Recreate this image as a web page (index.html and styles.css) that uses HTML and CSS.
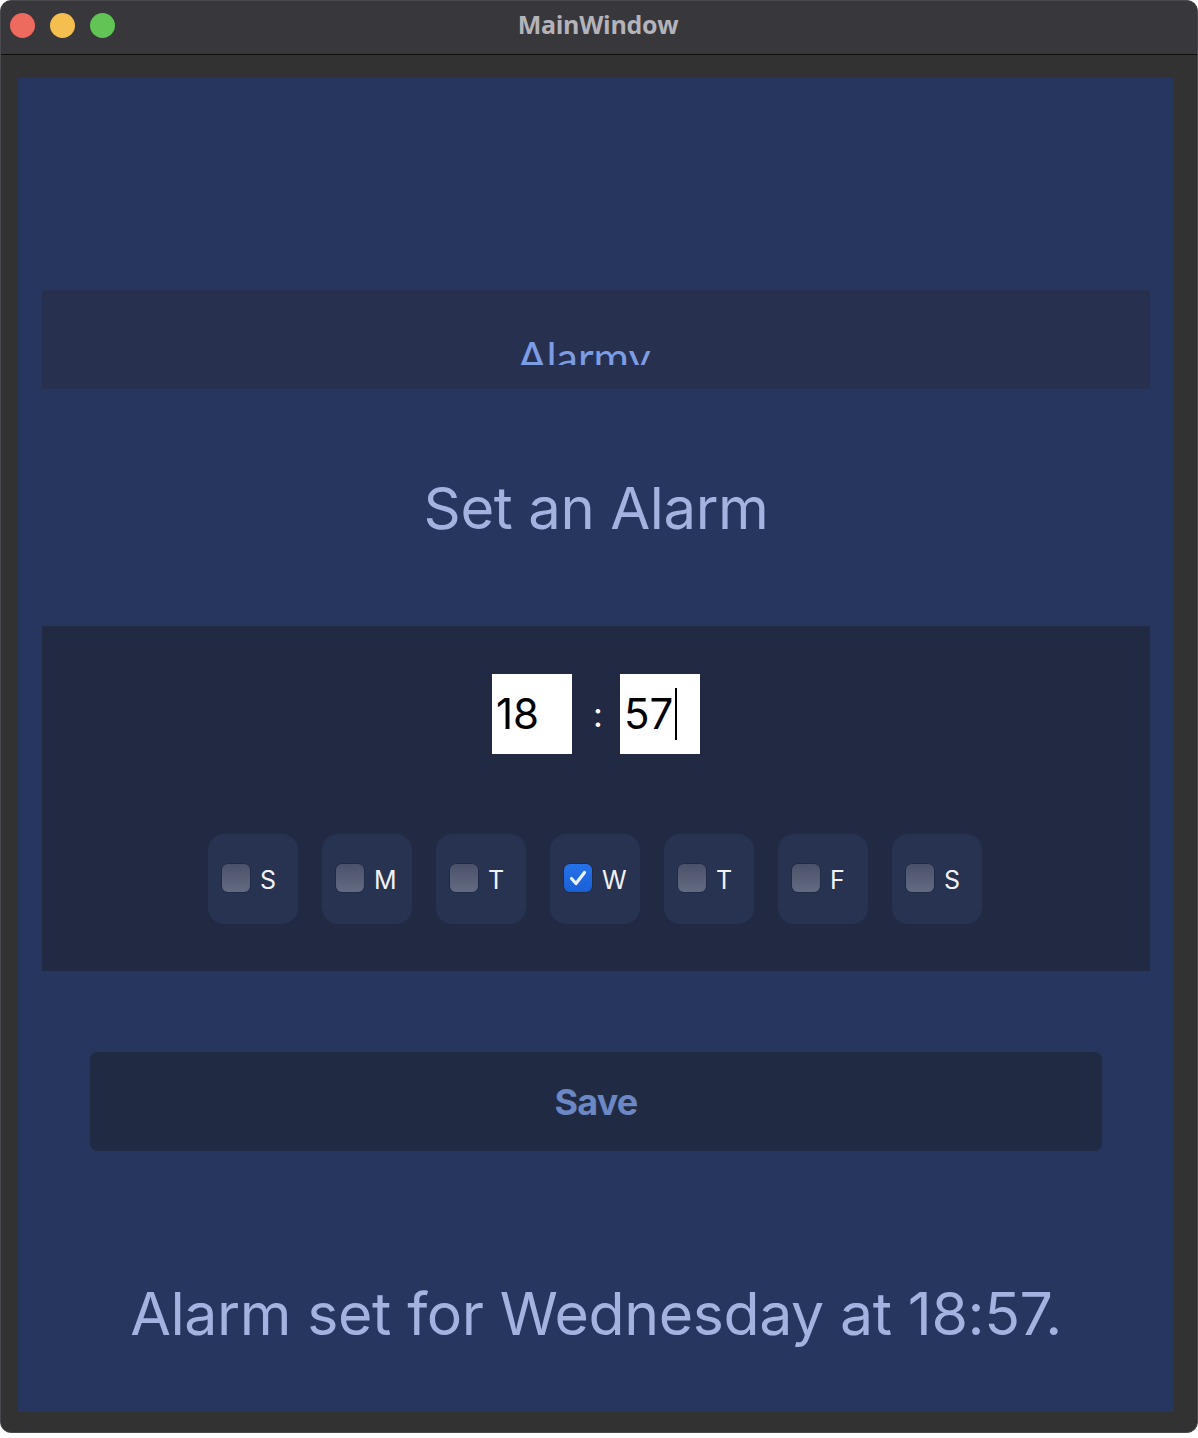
FILE: index.html
```html
<!DOCTYPE html>
<html>
<head>
<meta charset="utf-8">
<link rel="stylesheet" href="styles.css">
</head>
<body>
<div class="window">
  <div class="titlebar">
    <div class="lights">
      <span class="light red"></span>
      <span class="light yellow"></span>
      <span class="light green"></span>
    </div>
    <div class="wtitle">MainWindow</div>
  </div>
  <div class="frame">
    <div class="panel">
      <div class="header"><div class="brand">Alarmy</div></div>
      <div class="heading">Set an Alarm</div>
      <div class="timebox">
        <div class="timerow">
          <div class="tinput">18</div>
          <div class="colon">:</div>
          <div class="tinput">57<span class="caret"></span></div>
        </div>
        <div class="days">
          <div class="day"><span class="cb"></span><span class="dl">S</span></div>
          <div class="day"><span class="cb"></span><span class="dl">M</span></div>
          <div class="day"><span class="cb"></span><span class="dl">T</span></div>
          <div class="day"><span class="cb checked"><svg viewBox="0 0 28 28" width="28" height="28"><path d="M7.5 14.5 L12 19.5 L20.5 8.5" fill="none" stroke="#e8efff" stroke-width="3.2" stroke-linecap="round" stroke-linejoin="round"/></svg></span><span class="dl">W</span></div>
          <div class="day"><span class="cb"></span><span class="dl">T</span></div>
          <div class="day"><span class="cb"></span><span class="dl">F</span></div>
          <div class="day"><span class="cb"></span><span class="dl">S</span></div>
        </div>
      </div>
      <div class="savebtn">Save</div>
      <div class="status">Alarm set for Wednesday at 18:57.</div>
    </div>
  </div>
</div>
</body>
</html>
```
FILE: styles.css
```css
html, body {
  margin: 0;
  padding: 0;
  background: #ffffff;
}
body {
  width: 1198px;
  height: 1438px;
  overflow: hidden;
  font-family: Inter, "Noto Sans", sans-serif;
}
.window {
  width: 1196px;
  height: 1431px;
  border: 1px solid #4a4a4e;
  border-radius: 11px;
  overflow: hidden;
  background: #323232;
}
.titlebar {
  height: 53px;
  background: #38373c;
  border-bottom: 1px solid #0e0e0e;
  position: relative;
  display: flex;
  align-items: center;
  justify-content: center;
}
.lights {
  position: absolute;
  left: 9px;
  top: 12px;
  display: flex;
  gap: 15px;
}
.light {
  width: 25px;
  height: 25px;
  border-radius: 50%;
  display: block;
}
.red { background: #ee6a5e; }
.yellow { background: #f5bf4f; }
.green { background: #61c454; }
.wtitle {
  color: #b4b3b9;
  font-family: "Open Sans", sans-serif;
  font-weight: 700;
  font-size: 25px;
  letter-spacing: -0.3px;
  margin-left: -2px;
  margin-top: -8px;
}
.frame {
  padding: 23px 23px 19px 17px;
}
.panel {
  width: 1156px;
  height: 1334px;
  background: #27365e;
  display: flex;
  flex-direction: column;
  align-items: stretch;
  padding: 0 24px;
  box-sizing: border-box;
}
.header {
  margin-top: 212px;
  height: 99px;
  background: #27314f;
  overflow: hidden;
  display: flex;
  justify-content: center;
}
.brand {
  padding-top: 46px;
  font-family: Lato, sans-serif;
  font-size: 43px;
  line-height: 42px;
  color: #7c9de3;
  margin-left: -24px;
  height: 29px;
  overflow: hidden;
}
.heading {
  height: 237px;
  display: flex;
  align-items: center;
  justify-content: center;
  font-size: 58px;
  color: #a3b2df;
  letter-spacing: -0.4px;
}
.timebox {
  height: 345px;
  background: #212a42;
  box-sizing: border-box;
  padding-top: 48px;
  display: flex;
  flex-direction: column;
  align-items: center;
}
.timerow {
  display: flex;
  align-items: center;
  height: 80px;
}
.tinput {
  width: 80px;
  height: 80px;
  background: #ffffff;
  color: #000000;
  font-size: 42px;
  line-height: 80px;
  padding-left: 4px;
  box-sizing: border-box;
  display: flex;
  align-items: center;
}
.caret {
  display: inline-block;
  width: 2px;
  height: 52px;
  background: #000;
  margin-left: 2px;
}
.colon {
  width: 48px;
  text-align: center;
  color: #ffffff;
  font-size: 34px;
  padding-left: 4px;
  box-sizing: border-box;
}
.days {
  margin-top: 80px;
  margin-left: -2px;
  display: flex;
  gap: 24px;
}
.day {
  width: 90px;
  height: 90px;
  border-radius: 16px;
  background: #283352;
  display: flex;
  align-items: center;
  padding-left: 14px;
  box-sizing: border-box;
}
.cb {
  width: 28px;
  height: 28px;
  border-radius: 6px;
  background: linear-gradient(#4b5168, #636b82);
  box-shadow: 0 0 0 0.5px rgba(0,0,0,0.35);
  display: block;
  margin-top: -2px;
}
.cb.checked {
  background: linear-gradient(#2473ea, #1a5fd6);
}
.cb svg { display: block; }
.dl {
  color: #f2f2f5;
  font-size: 25px;
  margin-left: 10px;
  margin-top: 2px;
}
.savebtn {
  margin: 81px 48px 0 48px;
  height: 99px;
  border-radius: 8px;
  background: #202a42;
  display: flex;
  align-items: center;
  justify-content: center;
  color: #6b87c4;
  font-weight: 700;
  font-size: 36px;
  letter-spacing: -0.8px;
}
.status {
  padding-top: 130px;
  text-align: center;
  font-size: 59px;
  line-height: 66px;
  color: #a3b2df;
  letter-spacing: -0.4px;
}
```
